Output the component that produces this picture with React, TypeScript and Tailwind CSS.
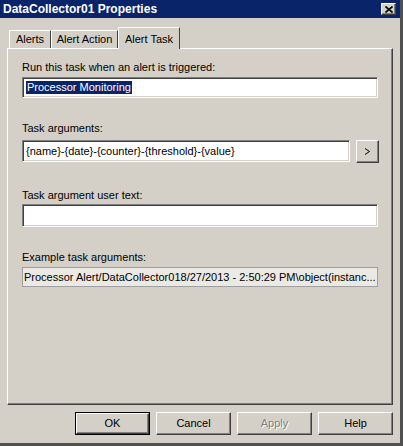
const font = { fontFamily: '"Liberation Sans", Arial, sans-serif' };

const sunken =
  'border border-t-[#808080] border-l-[#808080] border-b-white border-r-white shadow-[inset_1px_1px_0_#404040,inset_-1px_-1px_0_#d4d0c8]';
const raised =
  'border border-t-white border-l-white border-b-[#404040] border-r-[#404040] shadow-[inset_-1px_-1px_0_#808080]';

function Label({ children, className = '' }: { children: string; className?: string }) {
  return <div className={`text-[11px] leading-[13px] text-black ${className}`}>{children}</div>;
}

function DlgButton({ label, isDefault, disabled }: { label: string; isDefault?: boolean; disabled?: boolean }) {
  const inner = (
    <div
      className={`flex-1 flex items-center justify-center bg-[#d4d0c8] ${raised} text-[11px] ${
        disabled ? 'text-[#808080] [text-shadow:1px_1px_0_#fff]' : 'text-black'
      }`}
    >
      {label}
    </div>
  );
  return (
    <button className={`w-[75px] h-[23px] flex p-0 ${isDefault ? 'border border-black' : ''}`}>{inner}</button>
  );
}

export default function App() {
  return (
    <div
      style={font}
      className="w-[403px] h-[446px] flex flex-col bg-[#d4d0c8] border-r-[3px] border-b-[3px] border-r-[#505050] border-b-[#505050] overflow-hidden"
    >
      {/* Title bar */}
      <div className="h-[18px] bg-[#0a246a] flex items-center justify-between pl-[3px] pr-[4px] shrink-0">
        <span className="text-white font-bold text-[12px] leading-[18px]">DataCollector01 Properties</span>
        <div className={`w-[15px] h-[12px] bg-[#d4d0c8] ${raised} flex items-center justify-center`}>
          <svg width="8" height="7" viewBox="0 0 8 7">
            <path d="M0.5 0.5 L7.5 6.5 M7.5 0.5 L0.5 6.5" stroke="#000" strokeWidth="1.6" />
          </svg>
        </div>
      </div>

      {/* Tabs */}
      <div className="flex items-end mt-[9px] ml-[9px] h-[21px] shrink-0 relative z-10">
        <div className="w-[42px] h-[18px] border-t border-l border-white border-r border-r-[#404040] flex items-center justify-center text-[11px] text-black">
          Alerts
        </div>
        <div className="w-[67px] h-[18px] border-t border-l border-white border-r border-r-[#404040] flex items-center justify-center text-[11px] text-black">
          Alert Action
        </div>
        <div className="w-[62px] h-[22px] mb-[-1px] bg-[#d4d0c8] border-t border-l border-white border-r border-r-[#404040] flex items-start justify-center pt-[3px] text-[11px] text-black">
          Alert Task
        </div>
      </div>

      {/* Panel */}
      <div className="mx-[7px] h-[357px] shrink-0 border border-t-white border-l-white border-b-[#404040] border-r-[#404040] shadow-[inset_-1px_-1px_0_#808080] pl-[14px] pt-[12px]">
        <Label>Run this task when an alert is triggered:</Label>
        <div className={`mt-[3px] w-[356px] h-[21px] bg-white ${sunken} flex items-center pl-[3px]`}>
          <span className="bg-[#0a246a] text-white text-[11px] leading-[13px] px-[1px]">Processor Monitoring</span>
        </div>

        <Label className="mt-[24px]">Task arguments:</Label>
        <div className="mt-[5px] flex items-start">
          <div className={`w-[328px] h-[22px] bg-white ${sunken} flex items-center pl-[3px] text-[11px] text-black`}>
            {'{name}-{date}-{counter}-{threshold}-{value}'}
          </div>
          <button className={`ml-[6px] w-[23px] h-[23px] bg-[#d4d0c8] ${raised} flex items-center justify-center`}>
            <svg width="7" height="7" viewBox="0 0 7 7">
              <path d="M1 0.5 L5.5 3.5 L1 6.5" fill="none" stroke="#000" strokeWidth="1" />
            </svg>
          </button>
        </div>

        <Label className="mt-[26px]">Task argument user text:</Label>
        <div className={`mt-[2px] w-[356px] h-[23px] bg-white ${sunken}`} />

        <Label className="mt-[24px]">Example task arguments:</Label>
        <div
          className={`mt-[3px] w-[356px] h-[20px] bg-[#ebe9e4] border border-[#a0a0a0] flex items-center pl-[1px] text-[11px] text-black whitespace-nowrap overflow-hidden`}
        >
          Processor Alert/DataCollector018/27/2013 - 2:50:29 PM\object(instanc...
        </div>
      </div>

      {/* Buttons */}
      <div className="flex justify-end gap-[6px] pr-[7px] mt-[7px]">
        <DlgButton label="OK" isDefault />
        <DlgButton label="Cancel" />
        <DlgButton label="Apply" disabled />
        <DlgButton label="Help" />
      </div>
    </div>
  );
}
